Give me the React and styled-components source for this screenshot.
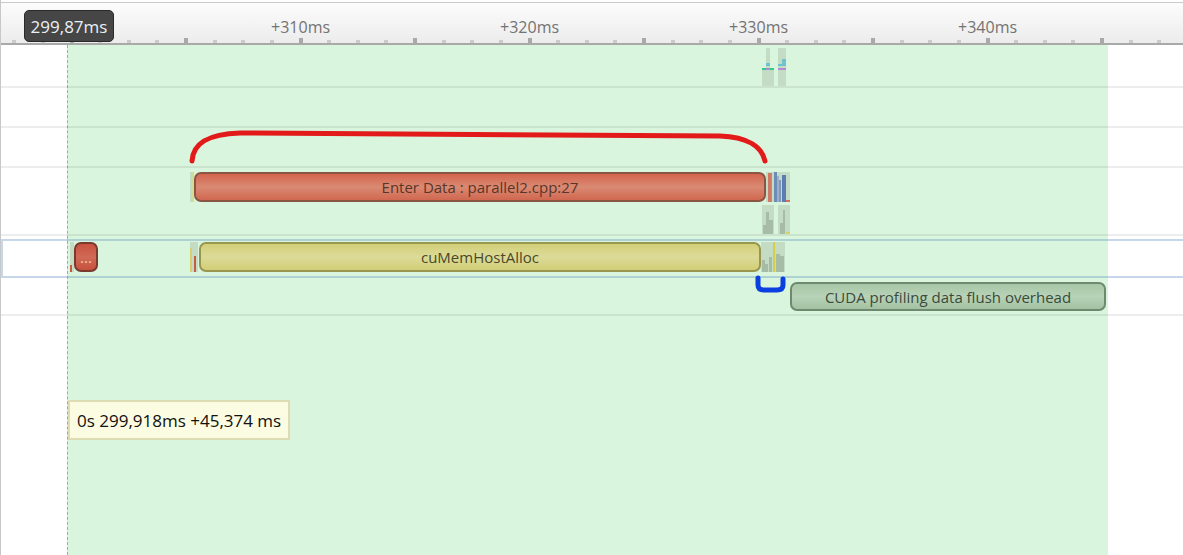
import React from "react";
import styled, { createGlobalStyle } from "styled-components";

const STEP = 28.625;

const Global = createGlobalStyle`
  html, body { margin: 0; padding: 0; background: #fff; }
  body { font-family: "Open Sans", "Noto Sans", sans-serif; }
`;

const Frame = styled.div`
  position: relative;
  width: 1183px;
  height: 555px;
  overflow: hidden;
  box-sizing: border-box;
  padding-top: 2px;
  display: flex;
  flex-direction: column;
  &::after {
    content: "";
    position: absolute;
    left: 0;
    top: 0;
    bottom: 0;
    width: 1px;
    background: #c8c8c8;
    z-index: 10;
  }
`;

/* ---------- ruler ---------- */

const Ruler = styled.div`
  position: relative;
  flex: none;
  height: 40px;
  display: flex;
  border-top: 1px solid #cacaca;
  border-bottom: 2px solid #a9a9a9;
  background: linear-gradient(#fcfcfc, #ececec);
`;

const TickCell = styled.div`
  flex: none;
  width: ${STEP}px;
  height: 100%;
  display: flex;
  flex-direction: column;
  align-items: center;
  justify-content: space-between;
`;

const TickLabel = styled.div`
  margin-top: 13px;
  font-size: 16px;
  line-height: 22px;
  color: #737373;
  white-space: nowrap;
`;

const Tick = styled.div`
  flex: none;
  margin-top: auto;
  width: 4px;
  height: ${(p) => (p.$major ? 5 : 3)}px;
  background: ${(p) => (p.$major ? "#a9a9a9" : "#cbcbcb")};
`;

const Badge = styled.div`
  position: absolute;
  left: 24px;
  top: 7px;
  width: 90px;
  height: 32px;
  box-sizing: border-box;
  border: 1px solid #2a2a2a;
  border-radius: 5px;
  background: #464646;
  color: #eaf0f6;
  font-size: 17px;
  display: flex;
  align-items: center;
  justify-content: center;
  z-index: 2;
`;

/* ---------- tracks ---------- */

const Tracks = styled.div`
  position: relative;
  flex: 1;
`;

const Range = styled.div`
  position: absolute;
  left: 67px;
  top: 0;
  bottom: 0;
  width: 1040px;
  background: #d9f5dd;
  border-left: 1px dashed #a6a6a6;
`;

const Rows = styled.div`
  position: relative;
  display: flex;
  flex-direction: column;
`;

const Row = styled.div`
  flex: none;
  box-sizing: border-box;
  height: ${(p) => p.$h}px;
  display: flex;
  flex-direction: column;
  gap: 3px;
  padding-top: ${(p) => p.$pad || 0}px;
  border-bottom: 2px solid rgba(0, 0, 0, 0.07);
`;

const Spacer = styled.div`
  flex: none;
  height: 3px;
`;

const SelectedRow = styled.div`
  flex: none;
  box-sizing: border-box;
  height: 39px;
  margin-left: 1px;
  padding-top: 1px;
  display: flex;
  flex-direction: column;
  border: 2px solid rgba(110, 155, 200, 0.4);
  border-right: none;
`;

const Lane = styled.div`
  display: flex;
  align-items: flex-start;
  gap: ${(p) => p.$gap || 0}px;
  padding-left: ${(p) => p.$start}px;
`;

const Gap = styled.div`
  flex: none;
  width: ${(p) => p.$w}px;
`;

const palettes = {
  red: {
    bg: "linear-gradient(#d4654f, #d98a73 50%, #d16750)",
    border: "#8a5643",
    color: "#5a3528",
  },
  yellow: {
    bg: "linear-gradient(#d3cf78, #dcdb98 50%, #d2ce77)",
    border: "#98964f",
    color: "#4a4828",
  },
  green: {
    bg: "linear-gradient(#a7c6a7, #b8d3b8 50%, #a3c1a3)",
    border: "#6e896e",
    color: "#3b4a3b",
  },
  dots: {
    bg: "linear-gradient(#c9523f, #d06a56 50%, #c7513e)",
    border: "#7a3a2e",
    color: "#f3c8b8",
  },
};

const Bar = styled.div`
  flex: none;
  height: ${(p) => p.$h || 30}px;
  box-sizing: border-box;
  border: 2px solid ${(p) => palettes[p.$kind].border};
  border-radius: 7px;
  background: ${(p) => palettes[p.$kind].bg};
  color: ${(p) => palettes[p.$kind].color};
  font-size: 15px;
  display: flex;
  align-items: center;
  justify-content: center;
  white-space: nowrap;
  overflow: hidden;
`;

const Chart = styled.svg`
  flex: none;
  display: block;
`;

const Tooltip = styled.div`
  position: absolute;
  left: 68px;
  top: 355px;
  height: 40px;
  box-sizing: border-box;
  padding: 0 7px;
  border: 2px solid #dedcb2;
  background: #fcfce2;
  color: #111;
  font-size: 17px;
  display: flex;
  align-items: center;
  white-space: nowrap;
  z-index: 3;
`;

const Ink = styled.svg`
  position: absolute;
  left: 0;
  top: 0;
  width: 1183px;
  height: 555px;
  pointer-events: none;
  z-index: 5;
`;

const BG = "#c4dcc4";
const GR = "#a6bca6";

function MiniChart({ w, h, bars }) {
  return (
    <Chart width={w} height={h} viewBox={`0 0 ${w} ${h}`}>
      {bars.map(([bx, by, bw, bh, c], i) => (
        <rect key={i} x={bx} y={by} width={bw} height={bh} fill={c} />
      ))}
    </Chart>
  );
}

const labels = { 4: "+310ms", 12: "+320ms", 20: "+330ms", 28: "+340ms" };
const ticks = [];
for (let k = -6; k <= 34; k++) ticks.push(k);

export default function App() {
  return (
    <>
      <Global />
      <Frame>
        <Ruler>
          {ticks.map((k) => (
            <TickCell key={k}>
              {labels[k] && <TickLabel>{labels[k]}</TickLabel>}
              <Tick $major={k % 4 === 0} />
            </TickCell>
          ))}
          <Badge>299,87ms</Badge>
        </Ruler>
        <Tracks>
          <Range />
          <Rows>
            <Row $h={43} $pad={3}>
              <Lane $start={762}>
                <MiniChart
                  w={24}
                  h={38}
                  bars={[
                    [0, 20, 12, 18, BG],
                    [4, 0, 4, 20, BG],
                    [4, 15, 4, 3, "#6ec3cf"],
                    [0, 20, 4, 2, "#35c98a"],
                    [4, 20, 4, 2, "#b48ad8"],
                    [8, 20, 4, 2, "#35c98a"],
                    [16, 0, 8, 38, BG],
                    [20, 11, 4, 7, "#6ec3cf"],
                    [16, 16, 8, 2, "#6ec3cf"],
                    [16, 20, 8, 2, "#b48ad8"],
                  ]}
                />
              </Lane>
            </Row>
            <Row $h={40} />
            <Row $h={40} />
            <Row $h={68} $pad={4}>
              <Lane $start={190}>
                <MiniChart
                  w={4}
                  h={30}
                  bars={[
                    [0, 0, 4, 30, "#d3db98"],
                    [0, 0, 1, 30, BG],
                  ]}
                />
                <Bar $kind="red" style={{ width: 572 }}>
                  Enter Data : parallel2.cpp:27
                </Bar>
                <MiniChart
                  w={24}
                  h={30}
                  bars={[
                    [0, 0, 24, 30, BG],
                    [2, 1, 3, 29, "#cf7a66"],
                    [5, 1, 1, 29, "#b89080"],
                    [8, 0, 3, 30, "#6d8cb8"],
                    [11, 4, 2, 26, "#9ab0c4"],
                    [13, 8, 2, 22, "#7f98b8"],
                    [16, 3, 4, 27, "#5b7db2"],
                    [20, 28, 4, 2, "#d07060"],
                  ]}
                />
              </Lane>
              <Lane $start={762} $gap={4}>
                <MiniChart
                  w={12}
                  h={29}
                  bars={[
                    [0, 0, 12, 29, BG],
                    [1, 20, 3, 9, GR],
                    [4, 7, 3, 22, GR],
                    [7, 15, 4, 14, GR],
                  ]}
                />
                <MiniChart
                  w={12}
                  h={29}
                  bars={[
                    [0, 0, 12, 29, BG],
                    [2, 18, 3, 11, GR],
                    [5, 5, 2, 24, GR],
                    [8, 27, 4, 2, "#d8d070"],
                  ]}
                />
              </Lane>
            </Row>
            <Spacer />
            <SelectedRow>
              <Lane $start={67}>
                <MiniChart
                  w={4}
                  h={30}
                  bars={[
                    [0, 0, 4, 30, BG],
                    [0, 23, 2, 7, "#c85a48"],
                  ]}
                />
                <Bar $kind="dots" style={{ width: 24 }}>
                  ...
                </Bar>
                <Gap $w={92} />
                <MiniChart
                  w={8}
                  h={30}
                  bars={[
                    [0, 0, 8, 30, BG],
                    [0, 6, 2, 24, "#d6d26e"],
                    [4, 14, 2, 16, "#c85a48"],
                  ]}
                />
                <Gap $w={1} />
                <Bar $kind="yellow" style={{ width: 562 }}>
                  cuMemHostAlloc
                </Bar>
                <MiniChart
                  w={24}
                  h={30}
                  bars={[
                    [0, 0, 24, 30, BG],
                    [1, 18, 3, 12, GR],
                    [4, 22, 3, 8, GR],
                    [8, 15, 3, 15, GR],
                    [12, 0, 2, 30, "#d8cc48"],
                    [15, 12, 4, 18, GR],
                    [19, 14, 4, 16, GR],
                  ]}
                />
              </Lane>
            </SelectedRow>
            <Row $h={38} $pad={4}>
              <Lane $start={790}>
                <Bar $kind="green" $h={29} style={{ width: 316 }}>
                  CUDA profiling data flush overhead
                </Bar>
              </Lane>
            </Row>
          </Rows>
          <Tooltip>0s 299,918ms +45,374 ms</Tooltip>
        </Tracks>
        <Ink viewBox="0 0 1183 555">
          <path
            d="M192,161 C193,143 208,134 240,133 L720,136 C748,137 762,147 765,161"
            fill="none"
            stroke="#e21a1a"
            strokeWidth="5"
            strokeLinecap="round"
          />
          <path
            d="M758,278 L758,285 Q758,290 764,290 L777,290 Q783,290 783,285 L783,279"
            fill="none"
            stroke="#0b3fe0"
            strokeWidth="5"
            strokeLinecap="round"
          />
        </Ink>
      </Frame>
    </>
  );
}
